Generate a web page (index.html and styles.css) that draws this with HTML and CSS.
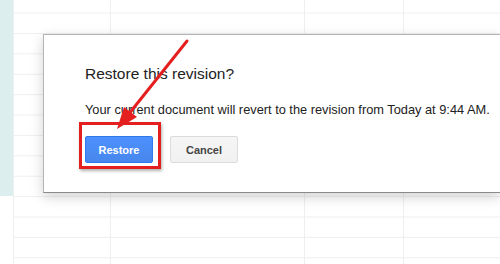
FILE: index.html
```html
<!DOCTYPE html>
<html lang="en">
<head>
  <meta charset="UTF-8" />
  <title>Restore this revision?</title>
  <link rel="stylesheet" href="styles.css">
</head>
<body>
  <div class="sheet">
    <div class="col col-frozen"></div>
    <div class="col col-a"></div>
    <div class="col col-b"></div>
    <div class="col col-c"></div>
    <div class="col col-d"></div>
  </div>

  <div class="dialog">
    <h2 class="dialog-title">Restore this revision?</h2>
    <p class="dialog-text">Your current document will revert to the revision from Today at 9:44 AM.</p>
    <div class="dialog-buttons">
      <span class="highlight-wrap">
        <button class="btn btn-primary">Restore</button>
        <span class="highlight-box"></span>
      </span>
      <button class="btn btn-default">Cancel</button>
    </div>
  </div>

  <!-- annotation arrow -->
  <svg class="annotation" width="500" height="264" viewBox="0 0 500 264">
    <line x1="187" y1="41" x2="128" y2="115" stroke="#e3201f" stroke-width="3" stroke-linecap="round" />
    <polygon points="117,129 124,107 137,117" fill="#e3201f" />
  </svg>
</body>
</html>
```

FILE: styles.css
```css
* {
  margin: 0;
  padding: 0;
  box-sizing: border-box;
}

body {
  width: 500px;
  height: 264px;
  overflow: hidden;
  position: relative;
  background: #fff;
  font-family: 'Liberation Sans', Arial, sans-serif;
}

/* Spreadsheet grid behind the dialog */
.sheet {
  display: flex;
  height: 264px;
  background-image: linear-gradient(to bottom, #efefef 1px, transparent 1px);
  background-size: 100% 20.4px;
  background-position: 0 12.6px;
}

.col {
  height: 100%;
  border-right: 1px solid #efefef;
}

.col-frozen {
  width: 14px;
  background: linear-gradient(to bottom, #dcefee 0, #dcefee 196px, #fff 196px);
}

.col-a { width: 97px; }
.col-b { width: 194px; }
.col-c { width: 99px; }
.col-d { flex: 1; border-right: none; }

/* Modal dialog */
.dialog {
  position: absolute;
  left: 43px;
  right: 0;
  top: 34px;
  height: 159px;
  background: #fff;
  border: 1px solid #b4b4b4;
  border-right: none;
  border-bottom-color: #8a8a8a;
  box-shadow: 0 4px 12px rgba(0, 0, 0, 0.18);
  padding: 30px 0 0 41px;
}

.dialog-title {
  font-size: 15.5px;
  font-weight: 400;
  color: #222;
  line-height: 18px;
}

.dialog-text {
  margin-top: 19px;
  font-size: 12.8px;
  color: #222;
  line-height: 15px;
  white-space: nowrap;
}

.dialog-buttons {
  display: flex;
  gap: 17px;
  margin-top: 19px;
}

.highlight-wrap {
  position: relative;
  display: flex;
}

.highlight-box {
  position: absolute;
  left: -6px;
  top: -14px;
  right: -8px;
  bottom: -6px;
  border: 3px solid #e3201f;
  box-shadow: 1px 2px 3px rgba(0, 0, 0, 0.3);
}

.btn {
  height: 27px;
  width: 68px;
  border-radius: 2px;
  font-family: 'Liberation Sans', Arial, sans-serif;
  font-size: 11px;
  font-weight: 700;
}

.btn-primary {
  color: #fff;
  background: linear-gradient(to bottom, #4d90fe, #4787ed);
  border: 1px solid #3079ed;
}

.btn-default {
  color: #444;
  background: linear-gradient(to bottom, #f5f5f5, #f1f1f1);
  border: 1px solid #dcdcdc;
}

.annotation {
  position: absolute;
  left: 0;
  top: 0;
}
```
